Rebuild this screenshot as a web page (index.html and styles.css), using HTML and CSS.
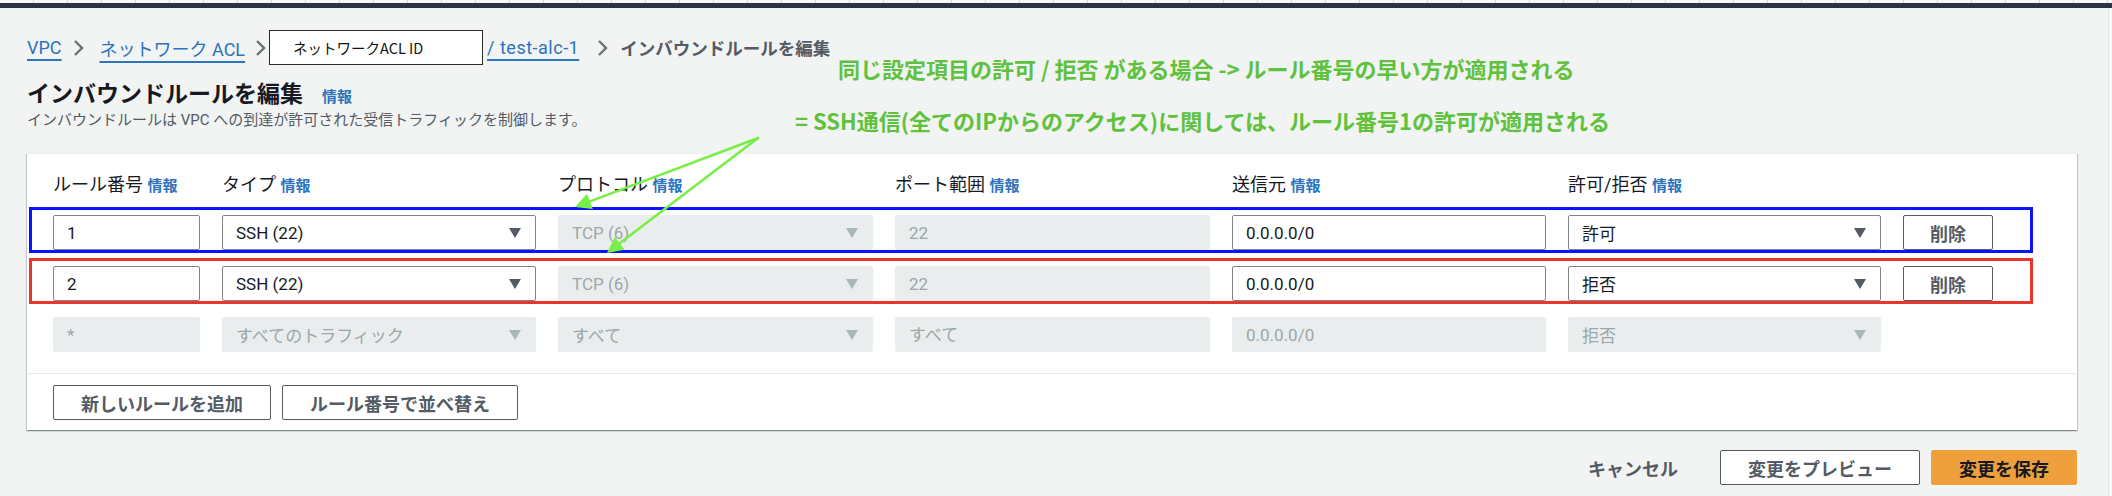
FILE: index.html
```html
<!DOCTYPE html>
<html lang="ja">
<head>
<meta charset="utf-8">
<title>インバウンドルールを編集</title>
<link rel="stylesheet" href="styles.css">
</head>
<body>
<div class="topstrip"></div>
<div class="topbar"></div>
<main class="main">
  <nav class="crumbs">
    <a class="crumb-link">VPC</a>
    <svg class="chev" width="11" height="18" viewBox="0 0 11 18"><polyline points="2,2 9,9 2,16" fill="none" stroke="#687078" stroke-width="2.4"/></svg>
    <a class="crumb-link">ネットワーク ACL</a>
    <svg class="chev chev-tight" width="11" height="18" viewBox="0 0 11 18"><polyline points="2,2 9,9 2,16" fill="none" stroke="#687078" stroke-width="2.4"/></svg>
    <span class="idbox">ネットワークACL ID</span>
    <a class="crumb-link crumb-name">/ test-alc-1</a>
    <svg class="chev chev-last" width="11" height="18" viewBox="0 0 11 18"><polyline points="2,2 9,9 2,16" fill="none" stroke="#687078" stroke-width="2.4"/></svg>
    <span class="crumb-current">インバウンドルールを編集</span>
  </nav>

  <header class="head">
    <h1 class="title">インバウンドルールを編集<a class="info info-title">情報</a></h1>
    <p class="desc">インバウンドルールは VPC への到達が許可された受信トラフィックを制御します。</p>
  </header>

  <section class="card">
    <div class="rules">
      <div class="row row-head">
        <div class="label">ルール番号 <a class="info">情報</a></div>
        <div class="label">タイプ <a class="info">情報</a></div>
        <div class="label">プロトコル <a class="info">情報</a></div>
        <div class="label">ポート範囲 <a class="info">情報</a></div>
        <div class="label">送信元 <a class="info">情報</a></div>
        <div class="label">許可/拒否 <a class="info">情報</a></div>
        <div></div>
      </div>

      <div class="row mark mark-blue">
        <div class="field">1</div>
        <div class="field select">SSH (22)<span class="caret"></span></div>
        <div class="field select dis">TCP (6)<span class="caret"></span></div>
        <div class="field dis">22</div>
        <div class="field">0.0.0.0/0</div>
        <div class="field select">許可<span class="caret"></span></div>
        <button class="btn btn-del">削除</button>
      </div>

      <div class="row mark mark-red">
        <div class="field">2</div>
        <div class="field select">SSH (22)<span class="caret"></span></div>
        <div class="field select dis">TCP (6)<span class="caret"></span></div>
        <div class="field dis">22</div>
        <div class="field">0.0.0.0/0</div>
        <div class="field select">拒否<span class="caret"></span></div>
        <button class="btn btn-del">削除</button>
      </div>

      <div class="row">
        <div class="field dis">*</div>
        <div class="field select dis">すべてのトラフィック<span class="caret"></span></div>
        <div class="field select dis">すべて<span class="caret"></span></div>
        <div class="field dis field-top">すべて</div>
        <div class="field dis">0.0.0.0/0</div>
        <div class="field select dis">拒否<span class="caret"></span></div>
        <div></div>
      </div>
    </div>
    <div class="card-foot">
      <button class="btn">新しいルールを追加</button>
      <button class="btn">ルール番号で並べ替え</button>
    </div>
  </section>

  <div class="actions">
    <button class="btn btn-link">キャンセル</button>
    <button class="btn">変更をプレビュー</button>
    <button class="btn btn-primary">変更を保存</button>
  </div>
</main>

<p class="note note-1">同じ設定項目の許可 / 拒否 がある場合 -&gt; ルール番号の早い方が適用される</p>
<p class="note note-2">= SSH通信(全てのIPからのアクセス)に関しては、ルール番号1の許可が適用される</p>

<svg class="arrows" width="2112" height="496" viewBox="0 0 2112 496">
  <line x1="758" y1="138" x2="590" y2="201.4" stroke="#78ee46" stroke-width="2.6" stroke-linecap="round"/>
  <polygon points="575,207 587.1,193.8 592.8,208.9" fill="#78ee46"/>
  <line x1="758" y1="138" x2="619.7" y2="243.3" stroke="#78ee46" stroke-width="2.6" stroke-linecap="round"/>
  <polygon points="607,253 614.9,236.9 624.6,249.7" fill="#78ee46"/>
</svg>
</body>
</html>
```

FILE: styles.css
```css
* {
  box-sizing: border-box;
  margin: 0;
  padding: 0;
}

html, body {
  width: 2112px;
  height: 496px;
  overflow: hidden;
}

body {
  position: relative;
  font-family: Roboto, "Noto Sans CJK JP", sans-serif;
  color: #16191f;
  background:
    linear-gradient(to left, #fbfbfb 0 3px, #e1e4e4 3px 4px, transparent 4px),
    #f2f3f3;
}

.topstrip {
  height: 3px;
  background: repeating-linear-gradient(90deg, #f5f6f6 0 33px, #d6dada 33px 34px);
}

.topbar {
  height: 5px;
  background: #2a3340;
}

.main {
  padding: 0 35px 0 27px;
}

/* breadcrumbs */
.crumbs {
  display: flex;
  align-items: center;
  height: 35px;
  margin-top: 22px;
  font-size: 18px;
  white-space: nowrap;
}

.crumb-link {
  color: #2d73bd;
  text-decoration: underline;
  text-decoration-thickness: 1.5px;
  text-underline-offset: 5px;
}

.crumb-name {
  letter-spacing: 0.5px;
}

.chev {
  flex: none;
  margin: 0 16px 0 11px;
}

.chev-tight {
  margin-left: 10px;
  margin-right: 3px;
}

.chev-last {
  margin-left: 18px;
  margin-right: 12px;
}

.idbox {
  display: flex;
  align-items: center;
  width: 214px;
  height: 35px;
  padding-left: 23px;
  margin-right: 4px;
  border: 1px solid #2b2b2b;
  background: #fff;
  color: #111;
  font-family: "Noto Sans CJK JP", sans-serif;
  font-size: 14.5px;
}

.crumb-current {
  color: #545b64;
  font-weight: 700;
  font-size: 17.5px;
}

/* header */
.head {
  margin-top: 17px;
}

.title {
  display: flex;
  align-items: baseline;
  font-size: 23px;
  line-height: 26px;
  font-weight: 700;
  color: #16191f;
}

.info {
  color: #2d73bd;
  font-size: 15px;
  font-weight: 700;
}

.info-title {
  margin-left: 19px;
}

.desc {
  font-size: 15px;
  line-height: 20px;
  color: #545b64;
}

/* card */
.card {
  margin-top: 23px;
  background: #fff;
  border-top: 1px solid #eaeded;
  box-shadow: 0 1px 1px 0 rgba(0, 28, 36, 0.3), 1px 1px 1px 0 rgba(0, 28, 36, 0.15), -1px 1px 1px 0 rgba(0, 28, 36, 0.15);
}

.rules {
  padding: 19px 26px 21px;
}

.row {
  position: relative;
  display: grid;
  width: fit-content;
  grid-template-columns: 147px 314px 315px 315px 314px 313px 90px;
  column-gap: 22px;
  margin-top: 16px;
}

.row-head {
  margin-top: 0;
}

.row-head + .row {
  margin-top: 17px;
}

.label {
  font-size: 18px;
  line-height: 24px;
  white-space: nowrap;
}

.mark::after {
  content: "";
  position: absolute;
  left: -24px;
  right: -40px;
  top: -8px;
  bottom: -3px;
  border: 3px solid;
  z-index: 2;
  pointer-events: none;
}

.mark-blue::after {
  border-color: #0a12ff;
}

.mark-red::after {
  border-color: #e8362c;
}

.field {
  display: flex;
  align-items: center;
  height: 35px;
  padding: 0 13px;
  border: 1px solid #7d8687;
  border-radius: 2px;
  background: #fff;
  font-size: 17px;
  white-space: nowrap;
}

.select {
  justify-content: space-between;
  padding-right: 14px;
}

.caret {
  width: 0;
  height: 0;
  border-left: 6px solid transparent;
  border-right: 6px solid transparent;
  border-top: 10px solid #545b64;
}

.dis {
  background: #eaeded;
  border-color: #eaeded;
  color: #9ba7a8;
}

.dis .caret {
  border-top-color: #aab7b8;
}

.field-top {
  align-items: flex-start;
  padding-top: 3px;
}

/* buttons */
.btn {
  display: inline-flex;
  align-items: center;
  justify-content: center;
  height: 35px;
  padding: 0 27px;
  border: 1px solid #545b64;
  border-radius: 2px;
  background: #fff;
  color: #545b64;
  font-family: Roboto, "Noto Sans CJK JP", sans-serif;
  font-size: 18px;
  font-weight: 700;
  white-space: nowrap;
}

.btn-del {
  padding: 0;
}

.card-foot {
  display: flex;
  gap: 11px;
  padding: 11px 26px 10px;
  border-top: 1px solid #eaeded;
}

.actions {
  display: flex;
  justify-content: flex-end;
  gap: 11px;
  margin-top: 20px;
}

.btn-link {
  border-color: transparent;
  background: transparent;
  padding: 0 30px 0 20px;
}

.btn-primary {
  background: #efa03c;
  border-color: #efa03c;
  color: #16191f;
}

/* annotations */
.note {
  position: absolute;
  font-family: "Noto Sans CJK JP", sans-serif;
  font-size: 22px;
  line-height: 30px;
  font-weight: 700;
  color: #5fc23c;
  white-space: nowrap;
}

.note-1 {
  left: 838px;
  top: 53px;
}

.note-2 {
  left: 795px;
  top: 105px;
}

.arrows {
  position: absolute;
  left: 0;
  top: 0;
  pointer-events: none;
  z-index: 3;
}
```
